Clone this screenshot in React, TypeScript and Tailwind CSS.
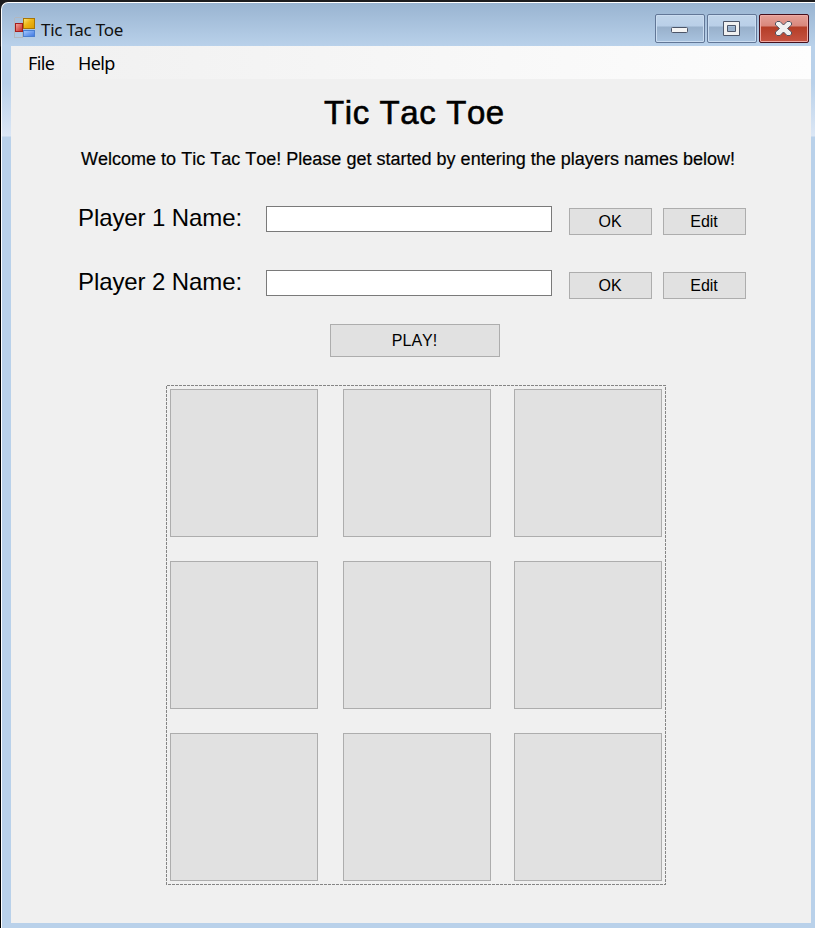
import type { ReactNode } from 'react';

const dashH = 'bg-[repeating-linear-gradient(90deg,#858585_0px,#858585_3px,transparent_3px,transparent_4px)]';
const dashV = 'bg-[repeating-linear-gradient(180deg,#858585_0px,#858585_3px,transparent_3px,transparent_4px)]';

function AppIcon() {
  return (
    <svg className="mt-[14px] ml-[12px] block shrink-0" width="22" height="22" viewBox="0 0 22 22" shapeRendering="crispEdges">
      <defs>
        <linearGradient id="gold" x1="0" y1="0" x2="1" y2="1"><stop offset="0" stopColor="#ffe87c" /><stop offset=".45" stopColor="#eeb515" /><stop offset="1" stopColor="#d99b00" /></linearGradient>
        <linearGradient id="red" x1="0" y1="0" x2="1" y2="1"><stop offset="0" stopColor="#f5aaa0" /><stop offset="1" stopColor="#c52522" /></linearGradient>
        <linearGradient id="blue" x1="0" y1="0" x2="1" y2="1"><stop offset="0" stopColor="#a5caff" /><stop offset="1" stopColor="#3c75e0" /></linearGradient>
      </defs>
      <path d="M.5 .5H9M.5 .5V20.5H9M8.5 14V20" fill="none" stroke="#b3b7bd" />
      <rect x="9.5" y="1.5" width="11" height="10" fill="url(#gold)" stroke="#a87505" />
      <rect x="1.5" y="6.5" width="7" height="8" fill="url(#red)" stroke="#a51d1c" />
      <rect x="9.5" y="13.5" width="11" height="6" fill="url(#blue)" stroke="#4a7fd0" />
    </svg>
  );
}

function CaptionButton({ close, children }: { close?: boolean; children: ReactNode }) {
  return (
    <div
      className={
        close
          ? 'h-[29px] w-[50px] rounded-[2px] border border-[#46101c] bg-[linear-gradient(#e5a198_0px,#d9877c_11px,#b43d27_12px,#c65442_27px)] shadow-[inset_0_0_0_1px_#efaaa4]'
          : 'h-[29px] w-[50px] rounded-[2px] border border-[#627797] bg-[linear-gradient(#c1d5ea_0px,#b9cfe8_11px,#98b0cb_12px,#a9c3df_27px)] shadow-[inset_0_0_0_1px_#cbddf1]'
      }
    >
      <svg width="48" height="27" viewBox="0 0 48 27" className="block">{children}</svg>
    </div>
  );
}

function TitleBar() {
  return (
    <header className="flex h-[42px] pr-[6px]">
      <AppIcon />
      <span className="mt-[15px] ml-[5px] h-6 font-['Noto_Sans',sans-serif] text-[17px] leading-6 tracking-[-0.25px] whitespace-nowrap text-[#111]">Tic Tac Toe</span>
      <div className="mt-[11px] ml-auto flex gap-[2px]">
        <CaptionButton>
          <rect x="15.5" y="12.5" width="16" height="5" rx="1" fill="#f4f4f4" stroke="#4c5568" />
        </CaptionButton>
        <CaptionButton>
          <path fillRule="evenodd" d="M15.5 6.5h16v14h-16zM19.5 10.5v6h8v-6z" fill="#f0f0f0" stroke="#4c5568" />
        </CaptionButton>
        <CaptionButton close>
          <path d="M17 6.5h3l3.5 3.5 3.5-3.5h3l1.5 1.5v2l-4 3.5 4 3.5v2l-1.5 1.5h-3l-3.5-3.5-3.5 3.5h-3l-1.5-1.5v-2l4-3.5-4-3.5v-2z" fill="#f0f0f0" stroke="#4f5260" />
        </CaptionButton>
      </div>
    </header>
  );
}

function FormButton({ label }: { label: string }) {
  return (
    <button className="h-[27px] w-[83px] border border-[#adadad] bg-[#e1e1e1] pr-px text-center text-[16px] leading-[25px]">{label}</button>
  );
}

function PlayerRow({ label }: { label: string }) {
  return (
    <div className="flex h-[29px] pl-[67px]">
      <label className="w-[188px] text-[24px] leading-6 tracking-[-0.1px] whitespace-nowrap">{label}</label>
      <input className="h-[26px] w-[286px] border border-[#7a7a7a] bg-white" />
      <div className="mt-[2px] ml-[17px] flex gap-[11px]">
        <FormButton label="OK" />
        <FormButton label="Edit" />
      </div>
    </div>
  );
}

function Board() {
  return (
    <div className="relative ml-[155px] h-[500px] w-[500px] pt-[4px] pl-[4px]">
      <div className={`absolute top-0 left-px h-px w-[499px] ${dashH}`} />
      <div className={`absolute bottom-0 left-[2px] h-px w-[498px] ${dashH}`} />
      <div className={`absolute top-px left-0 h-[499px] w-px ${dashV}`} />
      <div className={`absolute top-[2px] right-0 h-[498px] w-px ${dashV}`} />
      <div className="grid grid-cols-[173px_171px_148px] grid-rows-[172px_172px_148px]">
        {Array.from({ length: 9 }, (_, i) => (
          <button key={i} className="block h-[148px] w-[148px] border border-[#adadad] bg-[#e1e1e1]" />
        ))}
      </div>
    </div>
  );
}

export default function App() {
  return (
    <div className="h-[928px] w-[815px] overflow-hidden bg-[linear-gradient(#1c1c1e_0px,#1c1c1e_46px,#000_47px)] pt-[2px] pl-px font-['Liberation_Sans',Arial,sans-serif] text-black">
      <div className="h-[926px] rounded-tl-[7px] border-t border-l border-white bg-[linear-gradient(#99b4d1_0px,#b9d1ea_43px,#b9d1ea_80px,#dce7f5_133px,#b9d1ea_134px)]">
        <TitleBar />
        <main className="mt-px ml-[9px] h-[877px] w-[800px] bg-[#f0f0f0]">
          <nav className="flex h-[33px] bg-linear-to-r from-[#f0f0f0] to-[#fdfdfd] pt-[5px] pl-[17px] font-['Noto_Sans',sans-serif] text-[18px] leading-6 tracking-[-0.6px]">
            <span className="w-[50px]">File</span>
            <span>Help</span>
          </nav>
          <h1 className="h-[70px] pt-[15px] pl-[313px] text-[33px] leading-[38px] tracking-[0.6px] whitespace-nowrap [font-kerning:none] [-webkit-text-stroke:0.6px_#000]">Tic Tac Toe</h1>
          <p className="h-[57px] pl-[70px] text-[18px] leading-5 tracking-[0.01px] whitespace-nowrap [font-kerning:none] [-webkit-text-stroke:0.2px_#000]">Welcome to Tic Tac Toe! Please get started by entering the players names below!</p>
          <div className="flex flex-col gap-[35px]">
            <PlayerRow label="Player 1 Name:" />
            <PlayerRow label="Player 2 Name:" />
          </div>
          <div className="h-[86px] pt-[25px] pl-[319px]">
            <button className="block h-[33px] w-[170px] border border-[#adadad] bg-[#e1e1e1] pr-px text-[16px] leading-[31px] [font-kerning:none]">PLAY!</button>
          </div>
          <Board />
        </main>
      </div>
    </div>
  );
}
